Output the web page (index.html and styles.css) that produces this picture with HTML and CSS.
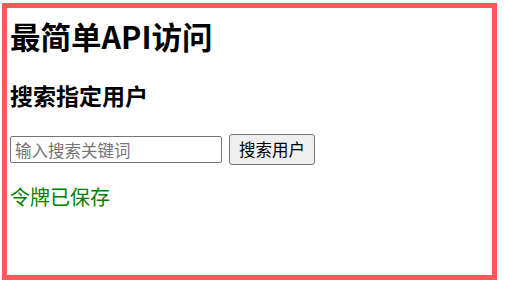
FILE: index.html
```html
<!DOCTYPE html>
<html lang="zh">
<head>
<meta charset="utf-8">
<title>最简单API访问</title>
<link rel="stylesheet" href="styles.css">
</head>
<body>
<div class="frame">
  <h2 class="title">最简单API访问</h2>
  <h3 class="subtitle">搜索指定用户</h3>
  <div class="search-row">
    <input class="search-input" type="text" placeholder="输入搜索关键词">
    <button class="search-btn" type="button">搜索用户</button>
  </div>
  <p class="status">令牌已保存</p>
</div>
</body>
</html>
```

FILE: styles.css
```css
html, body {
  margin: 0;
  padding: 0;
  background: #ffffff;
}
body {
  font-family: "Noto Sans CJK SC", "Liberation Sans", sans-serif;
  color: #000;
}
.frame {
  box-sizing: border-box;
  margin: 3px 0 0 2px;
  width: 495px;
  height: 277px;
  border: 5px solid #ff5858;
  padding: 8px 0 0 3px;
}
.title {
  margin: 0;
  font-size: 30.5px;
  line-height: 40px;
  font-weight: bold;
}
.subtitle {
  margin: 24px 0 0;
  font-size: 23px;
  line-height: 31px;
  font-weight: bold;
}
.search-row {
  margin-top: 23px;
  display: flex;
  align-items: center;
  gap: 7px;
  height: 31px;
}
.search-input {
  box-sizing: border-box;
  width: 212px;
  height: 27px;
  margin: 0;
  padding: 1px 4px;
  border: 1px solid #767676;
  border-radius: 2px;
  font-family: "Noto Sans CJK SC", "Liberation Sans", sans-serif;
  font-size: 16.5px;
  line-height: 23px;
  color: #000;
  background: #fff;
}
.search-input::placeholder {
  color: #757575;
}
.search-btn {
  box-sizing: border-box;
  height: 31px;
  width: 86px;
  margin: 0;
  padding: 0 7px;
  border: 1px solid #767676;
  border-radius: 3px;
  background: #efefef;
  font-family: "Noto Sans CJK SC", "Liberation Sans", sans-serif;
  font-size: 16.5px;
  line-height: 27px;
  color: #000;
}
.status {
  margin: 18px 0 0;
  font-size: 20px;
  line-height: 27px;
  color: #008000;
}
```
